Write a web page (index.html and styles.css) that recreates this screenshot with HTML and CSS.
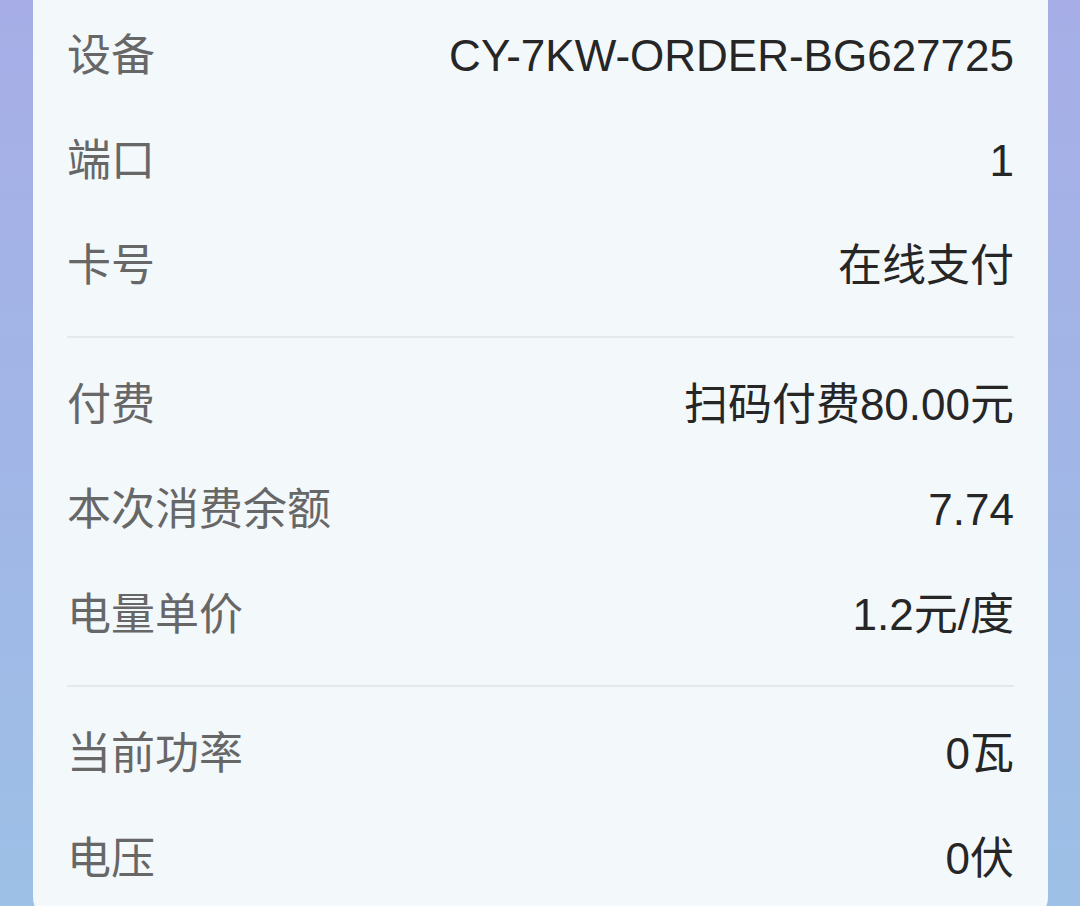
FILE: index.html
```html
<!DOCTYPE html>
<html lang="zh-CN">
<head>
<meta charset="utf-8">
<title>订单详情</title>
<link rel="stylesheet" href="styles.css">
</head>
<body>
<div class="page">
  <div class="card">
    <div class="section first">
      <div class="row"><span class="label">设备</span><span class="value">CY-7KW-ORDER-BG627725</span></div>
      <div class="row"><span class="label">端口</span><span class="value">1</span></div>
      <div class="row"><span class="label">卡号</span><span class="value">在线支付</span></div>
    </div>
    <div class="divider"></div>
    <div class="section">
      <div class="row"><span class="label">付费</span><span class="value">扫码付费80.00元</span></div>
      <div class="row"><span class="label">本次消费余额</span><span class="value">7.74</span></div>
      <div class="row"><span class="label">电量单价</span><span class="value">1.2元/度</span></div>
    </div>
    <div class="divider"></div>
    <div class="section">
      <div class="row"><span class="label">当前功率</span><span class="value">0瓦</span></div>
      <div class="row"><span class="label">电压</span><span class="value">0伏</span></div>
    </div>
  </div>
</div>
</body>
</html>
```

FILE: styles.css
```css
html, body {
  margin: 0;
  padding: 0;
  height: 906px;
  overflow: hidden;
}

body {
  background: linear-gradient(180deg, #a7aee7 0%, #a1b6e6 50%, #9dc0e6 100%);
  font-family: "Liberation Sans", "Noto Sans CJK SC", sans-serif;
}

.page {
  padding: 0 32px 0 33px;
}

.card {
  background: #f3f8fb;
  border-radius: 0 0 26px 26px;
  padding: 3px 34px 40px 34px;
  height: 880px;
}

.section {
  display: flex;
  flex-direction: column;
}

.row {
  height: 105px;
  display: flex;
  align-items: center;
  justify-content: space-between;
  font-size: 44px;
  line-height: 1;
}

.label {
  color: #676767;
}

.value {
  color: #262626;
}

.divider {
  height: 2px;
  background: #e5e9ec;
  margin: 18px 0 14px;
}
```
